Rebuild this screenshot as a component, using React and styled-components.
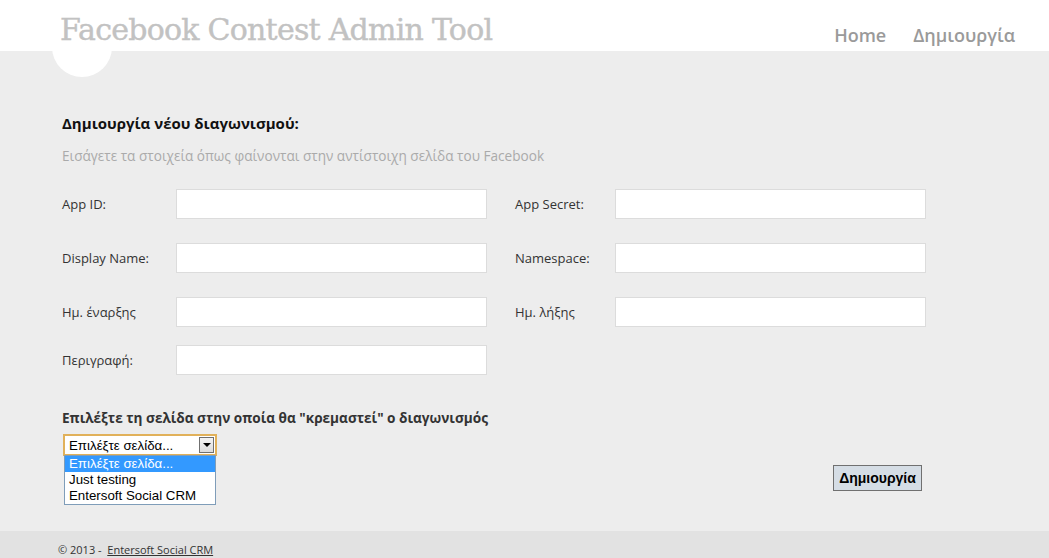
import React from 'react';
import styled, { createGlobalStyle } from 'styled-components';

const GlobalStyle = createGlobalStyle`
    html, body {
        margin: 0;
        padding: 0;
        height: 100%;
    }
    body {
        font-family: "Open Sans", "Noto Sans", sans-serif;
        background: #ededed;
    }
`;

const Page = styled.div`
    height: 558px;
    display: flex;
    flex-direction: column;
    overflow: hidden;
`;

const Header = styled.header`
    position: relative;
    height: 51px;
    background: #fff;
    display: flex;
    justify-content: space-between;
    align-items: flex-start;
    padding: 0 34px 0 60px;
    box-sizing: border-box;
`;

const Logo = styled.div`
    position: absolute;
    left: 52px;
    top: 17px;
    width: 60px;
    height: 60px;
    border-radius: 50%;
    background: #fff;
`;

const Title = styled.h1`
    position: relative;
    margin: 11px 0 0;
    font-family: "DejaVu Serif", "Liberation Serif", serif;
    font-weight: normal;
    font-size: 30px;
    line-height: 38px;
    color: #c2c2c2;
    letter-spacing: -0.75px;
    -webkit-text-stroke: 0.4px #c2c2c2;
`;

const Nav = styled.nav`
    display: flex;
    gap: 27px;
    margin-top: 22px;
`;

const NavLink = styled.a`
    font-size: 18px;
    font-weight: 600;
    line-height: 26px;
    color: #9a9a9a;
    text-decoration: none;
`;

const Main = styled.main`
    flex: 1;
    padding: 62px 0 0 62px;
`;

const Heading = styled.h2`
    margin: 0;
    font-size: 15px;
    font-weight: 700;
    line-height: 20px;
    color: #111;
`;

const Hint = styled.p`
    margin: 13px 0 24px;
    font-size: 13.6px;
    line-height: 19px;
    color: #aaa;
`;

const Row = styled.div`
    display: flex;
    align-items: center;
    margin-bottom: ${p => p.$gap || 24}px;
`;

const Field = styled.div`
    display: flex;
    align-items: center;
    width: 425px;
    & + & {
        margin-left: 28px;
        width: 411px;
    }
`;

const Label = styled.label`
    width: ${p => p.$w}px;
    flex-shrink: 0;
    font-size: 13px;
    color: #333;
`;

const Input = styled.input`
    width: 311px;
    height: 30px;
    box-sizing: border-box;
    border: 1px solid #dcdcdc;
    background: #fff;
    outline: none;
`;

const SubHeading = styled.h3`
    margin: 33px 0 6px;
    font-size: 13.6px;
    font-weight: 700;
    line-height: 20px;
    color: #333;
`;

const Bottom = styled.div`
    display: flex;
    justify-content: space-between;
    width: 864px;
`;

const SelectWrap = styled.div`
    position: relative;
    width: 154px;
    margin-left: 1px;
`;

const SelectBox = styled.div`
    height: 22px;
    box-sizing: border-box;
    border: 2px solid #e1b15a;
    background: #fff;
    display: flex;
    align-items: center;
    justify-content: space-between;
    font-family: "Liberation Sans", Arial, sans-serif;
    font-size: 13.3px;
    color: #000;
    padding-left: 4px;
`;

const Arrow = styled.span`
    width: 15px;
    height: 16px;
    margin-right: 1px;
    box-sizing: border-box;
    border: 1px solid #707070;
    background: linear-gradient(#f4f4f4, #dcdcdc);
    display: flex;
    align-items: center;
    justify-content: center;
    &::after {
        content: '';
        border-left: 4px solid transparent;
        border-right: 4px solid transparent;
        border-top: 4px solid #000;
    }
`;

const List = styled.ul`
    position: absolute;
    top: 21px;
    left: 1px;
    width: 152px;
    margin: 0;
    padding: 0;
    list-style: none;
    box-sizing: border-box;
    border: 1px solid #7f9db9;
    background: #fff;
    font-family: "Liberation Sans", Arial, sans-serif;
    font-size: 13.3px;
`;

const Option = styled.li`
    height: 16px;
    line-height: 16px;
    padding-left: 4px;
    color: ${p => (p.$active ? '#fff' : '#000')};
    background: ${p => (p.$active ? '#3399ff' : 'transparent')};
`;

const Button = styled.button`
    margin-top: 31px;
    height: 26px;
    width: 89px;
    padding: 0;
    margin-right: 4px;
    box-sizing: border-box;
    border: 1px solid #707070;
    background: #d5dde5;
    font-family: "Liberation Sans", Arial, sans-serif;
    font-size: 14px;
    font-weight: 700;
    color: #000;
`;

const Footer = styled.footer`
    height: 27px;
    background: #e2e2e2;
    padding: 11px 0 0 58px;
    box-sizing: border-box;
    font-size: 11px;
    line-height: 16px;
    color: #333;
`;

const FooterLink = styled.a`
    color: #333;
    text-decoration: underline;
`;

export default function App() {
    const pages = ['Επιλέξτε σελίδα...', 'Just testing', 'Entersoft Social CRM'];

    return (
        <Page>
            <GlobalStyle />
            <Header>
                <Logo />
                <Title>Facebook Contest Admin Tool</Title>
                <Nav>
                    <NavLink href="#">Home</NavLink>
                    <NavLink href="#">Δημιουργία</NavLink>
                </Nav>
            </Header>
            <Main>
                <Heading>Δημιουργία νέου διαγωνισμού:</Heading>
                <Hint>Εισάγετε τα στοιχεία όπως φαίνονται στην αντίστοιχη σελίδα του Facebook</Hint>
                <Row>
                    <Field><Label $w={114}>App ID:</Label><Input /></Field>
                    <Field><Label $w={100}>App Secret:</Label><Input /></Field>
                </Row>
                <Row>
                    <Field><Label $w={114}>Display Name:</Label><Input /></Field>
                    <Field><Label $w={100}>Namespace:</Label><Input /></Field>
                </Row>
                <Row $gap={18}>
                    <Field><Label $w={114}>Ημ. έναρξης</Label><Input /></Field>
                    <Field><Label $w={100}>Ημ. λήξης</Label><Input /></Field>
                </Row>
                <Row $gap={0}>
                    <Field><Label $w={114}>Περιγραφή:</Label><Input /></Field>
                </Row>
                <SubHeading>Επιλέξτε τη σελίδα στην οποία θα "κρεμαστεί" ο διαγωνισμός</SubHeading>
                <Bottom>
                    <SelectWrap>
                        <SelectBox>
                            {pages[0]}
                            <Arrow />
                        </SelectBox>
                        <List>
                            {pages.map((p, i) => (
                                <Option key={p} $active={i === 0}>{p}</Option>
                            ))}
                        </List>
                    </SelectWrap>
                    <Button>Δημιουργία</Button>
                </Bottom>
            </Main>
            <Footer>
                © 2013 -&nbsp; <FooterLink href="#">Entersoft Social CRM</FooterLink>
            </Footer>
        </Page>
    );
}
